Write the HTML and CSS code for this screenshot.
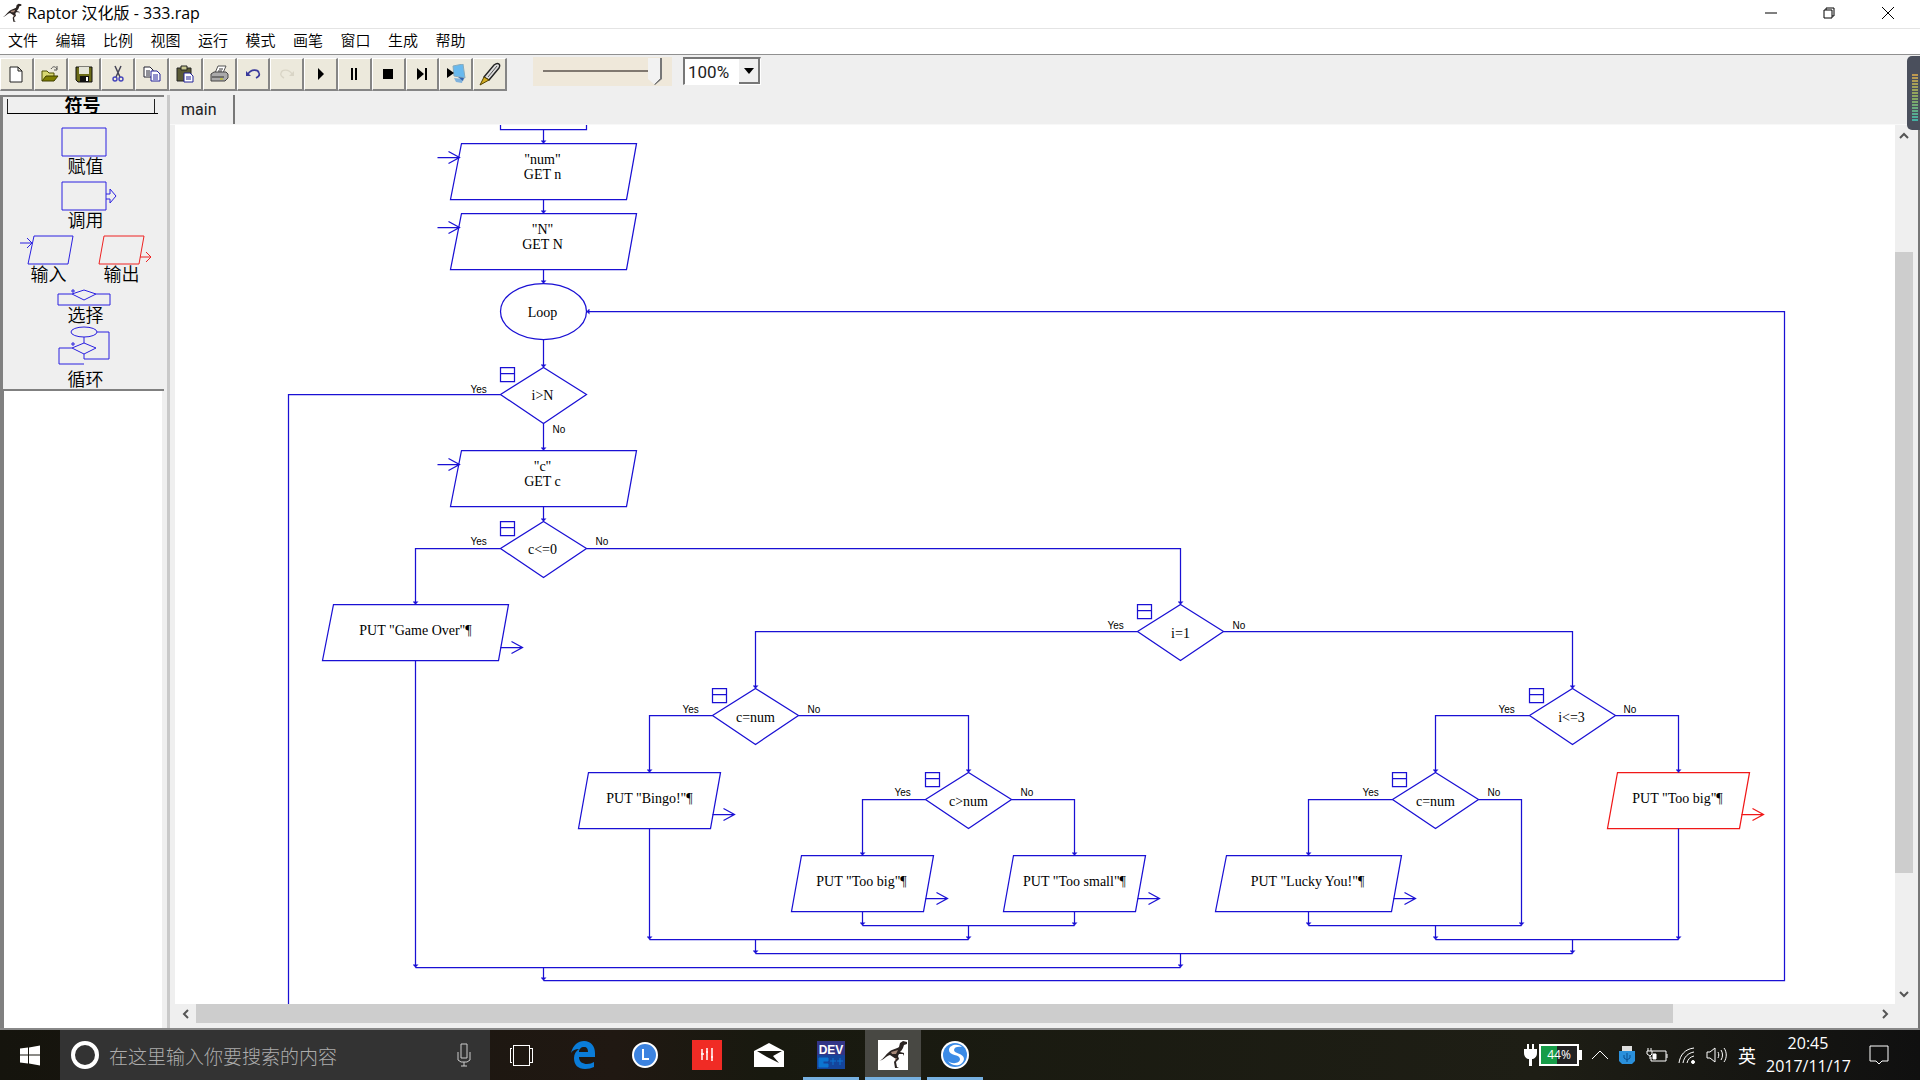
FILE: index.html
```html
<!DOCTYPE html>
<html lang="zh-CN">
<head>
<meta charset="utf-8">
<title>Raptor 汉化版 - 333.rap</title>
<link rel="stylesheet" href="styles.css">
</head>
<body>
<svg class="defs" aria-hidden="true">
  <defs>
    <symbol id="raptor" viewBox="0 0 30 30">
      <path d="M1 21C5 20 7 15 11 12C14 9 18 9 21 7L22 3L25 1L29 2L29 4L26 5L25 8C24 10 23 11 22 12L26 13L26 16L25 14L21 14L20 16L21 19L18 22L19 27L21 28L17 28L16 22L18 19L15 17L12 15C8 16 6 20 1 21Z" fill="#2b2422"/>
      <path d="M13 12L20 10L18 14L14 14ZM17 18L19 18L17 21Z" fill="#a88878"/>
    </symbol>
  </defs>
</svg>

<header class="titlebar">
  <svg class="app-icon"><use href="#raptor"/></svg>
  <h1 class="app-title">Raptor 汉化版 - 333.rap</h1>
  <div class="window-controls">
    <button aria-label="最小化"><svg viewBox="0 0 12 12"><path d="M0 6H12"/></svg></button>
    <button aria-label="还原"><svg viewBox="0 0 12 12"><path d="M1 3H9V11H1ZM3 3V1H11V9H9"/></svg></button>
    <button aria-label="关闭"><svg viewBox="0 0 12 12"><path d="M0 0L12 12M12 0L0 12"/></svg></button>
  </div>
</header>

<nav class="menubar">
  <div class="menus">
    <button>文件</button><button>编辑</button><button>比例</button><button>视图</button><button>运行</button><button>模式</button><button>画笔</button><button>窗口</button><button>生成</button><button>帮助</button>
  </div>
</nav>

<div class="toolbar">
  <div class="tools">
    <button aria-label="新建"><svg viewBox="0 0 20 20"><path d="M4 3H12L16 7V18H4ZM12 3V7H16" fill="#fff" stroke="#222"/></svg></button>
    <button aria-label="打开"><svg viewBox="0 0 20 20"><path d="M2 17V7H7L9 9H14V12" fill="#d8d870" stroke="#4f4f00"/><path d="M2 17L6 12H18L14 17Z" fill="#808000" stroke="#3f3f00"/><path d="M11 5C13 2 15 2 17 5M17 2V6H14" fill="none" stroke="#555"/></svg></button>
    <button aria-label="保存"><svg viewBox="0 0 20 20"><path d="M2 3H18V18H4L2 16Z" fill="#6b6b18" stroke="#111"/><path d="M5 3H15V10H5Z" fill="#e4e4d8"/><path d="M6 12H15V18H6Z" fill="#111"/><path d="M12 13H14V17H12Z" fill="#fff"/></svg></button>
    <button aria-label="剪切"><svg viewBox="0 0 20 20"><path d="M7 2L12 13M13 2L8 13" fill="none" stroke="#445" stroke-width="1.5"/><circle cx="7" cy="15" r="2" fill="none" stroke="#44b" stroke-width="1.4"/><circle cx="13" cy="15" r="2" fill="none" stroke="#44b" stroke-width="1.4"/></svg></button>
    <button aria-label="复制"><svg viewBox="0 0 20 20"><path d="M2 3H8L11 6V13H2Z" fill="#fff" stroke="#223"/><path d="M4 7H8M4 9H8M4 11H8" stroke="#223"/><path d="M9 7H15L18 10V17H9Z" fill="#fff" stroke="#229"/><path d="M11 11H16M11 13H16M11 15H16" stroke="#229"/></svg></button>
    <button aria-label="粘贴"><svg viewBox="0 0 20 20"><path d="M2 4H16V17H2Z" fill="#5a5a34" stroke="#222"/><path d="M6 2H12V6H6Z" fill="#c8c890" stroke="#222"/><path d="M9 9H15L18 12V18H9Z" fill="#fff" stroke="#229"/><path d="M11 13H16M11 15H16" stroke="#229"/></svg></button>
    <button aria-label="打印"><svg viewBox="0 0 20 20"><path d="M6 9L9 2H17L14 9" fill="#fff" stroke="#555"/><path d="M2 10L5 8H17L19 10V14L16 17H2Z" fill="#aaa" stroke="#444"/><path d="M3 13H15M10 5H14M9 7H13" stroke="#333"/><path d="M11 15H14" stroke="#cc0"/></svg></button>
    <button aria-label="撤销"><svg viewBox="0 0 20 20"><path d="M5 10C8 5 15 5 16 9C17 11 15 13 13 14" fill="none" stroke="#3a3a9c" stroke-width="1.6"/><path d="M3 7V12H8Z" fill="#3a3a9c"/></svg></button>
    <button aria-label="重做" disabled><svg viewBox="0 0 20 20"><path d="M15 10C12 5 5 5 4 9C3 11 5 13 7 14" fill="none" stroke="#d9d5c6" stroke-width="1.4"/><path d="M17 7V12H12Z" fill="#d9d5c6"/></svg></button>
    <button aria-label="运行"><svg viewBox="0 0 20 20"><path d="M7 4L13 10L7 16Z"/></svg></button>
    <button aria-label="暂停"><svg viewBox="0 0 20 20"><path d="M7 4H9V16H7ZM11 4H13V16H11Z"/></svg></button>
    <button aria-label="停止"><svg viewBox="0 0 20 20"><path d="M5 5H15V15H5Z"/></svg></button>
    <button aria-label="单步"><svg viewBox="0 0 20 20"><path d="M5 4L12 10L5 16ZM13 4H15V16H13Z"/></svg></button>
    <button aria-label="测试"><svg viewBox="0 0 20 20"><path d="M7 2L17 0L19 14L8 12Z" fill="#68b9ee" stroke="#8ab"/><path d="M8 14L17 15L16 19L10 18Z" fill="#7fb2dc"/><path d="M12 13L18 14L17 17Z" fill="#2e62ad"/><path d="M1 4L8 9L1 14Z"/></svg></button>
    <button aria-label="画笔"><svg viewBox="0 0 24 24"><path d="M6 15L16 3C20 0 23 2 21 6L11 18Z" fill="#ddd" stroke="#222" stroke-width="1.4"/><path d="M10 15L19 4" stroke="#555"/><path d="M6 15L11 18L2 23Z" fill="#d3ad22" stroke="#554400"/></svg></button>
  </div>
  <input class="speed" type="range" min="0" max="100" value="100" aria-label="速度">
  <div class="zoom">
    <select aria-label="缩放"><option>100%</option></select>
    <span class="zoom-arrow"></span>
  </div>
</div>

<main class="workspace">
  <aside class="sidebar">
    <section class="symbols">
      <h2>符号</h2>
      <button><svg width="46" height="30"><path d="M1 1H45V29H1Z"/></svg><span>赋值</span></button>
      <button><svg width="60" height="30"><path d="M8 1H52V29H8ZM52 13H56V8L62 15L56 22V18H52"/></svg><span>调用</span></button>
      <div class="pair">
        <button><svg width="54" height="30"><path d="M14 1H53L48 29H8ZM0 8H12M7 3L12 8L7 13"/></svg><span>输入</span></button>
        <button class="output"><svg width="54" height="30"><path d="M6 1H46L41 29H1ZM42 22H53M48 17L53 22L48 27"/></svg><span>输出</span></button>
      </div>
      <button><svg width="54" height="17"><path d="M15 5H1V16H53V5H39L27 1L15 5L27 11L39 5"/><path d="M15 1H17V3H15Z"/></svg><span>选择</span></button>
      <button><svg width="54" height="40" viewBox="0 4 54 40"><ellipse cx="27" cy="6" rx="13" ry="5"/><path d="M40 6H52V33H27V28M27 11V17L15 22L27 28L39 22L27 17M15 22H2V38H27"/><path d="M15 17H17V19H15Z"/></svg><span>循环</span></button>
    </section>
    <div class="watch"></div>
  </aside>

  <section class="document">
    <div class="tabs"><button class="tab">main</button></div>
    <div class="view">
      <div class="canvas">
        <svg class="chart" width="1720" height="880" viewBox="174.5 124.5 1720 880">
          <defs>
            <marker id="tip" viewBox="0 0 8 6" refX="5" refY="3" markerWidth="8" markerHeight="6" orient="auto" markerUnits="userSpaceOnUse"><path class="tip" d="M2 0L5 3L2 6Z"/></marker>
            <symbol id="decision" overflow="visible"><path d="M0 0L43 27L0 56L-43 27Z"/><path d="M-43 0H-29V14H-43ZM-43 6H-29"/></symbol>
            <symbol id="arrow" overflow="visible"><path d="M0 0H22M11 -6L22 0L11 6"/></symbol>
            <symbol id="wide" overflow="visible"><path d="M-82 0H93L83 56H-93Z"/></symbol>
            <symbol id="narrow" overflow="visible"><path d="M-61 0H71L61 56H-71Z"/></symbol>
          </defs>
          <g class="shapes">
            <path d="M500 120V129H586V120"/>
            <use href="#wide" x="543" y="143"/><use href="#arrow" x="437" y="157"/>
            <use href="#wide" x="543" y="213"/><use href="#arrow" x="437" y="227"/>
            <ellipse cx="543" cy="311" rx="43" ry="28"/>
            <use href="#decision" x="543" y="367"/>
            <use href="#wide" x="543" y="450"/><use href="#arrow" x="437" y="464"/>
            <use href="#decision" x="543" y="521"/>
            <use href="#wide" x="415" y="604"/><use href="#arrow" x="500" y="647"/>
            <use href="#decision" x="1180" y="604"/>
            <use href="#decision" x="755" y="688"/>
            <use href="#decision" x="1572" y="688"/>
            <use href="#narrow" x="649" y="772"/><use href="#arrow" x="712" y="814"/>
            <use href="#decision" x="968" y="772"/>
            <use href="#decision" x="1435" y="772"/>
            <use href="#narrow" x="862" y="855"/><use href="#arrow" x="925" y="898"/>
            <use href="#narrow" x="1074" y="855"/><use href="#arrow" x="1137" y="898"/>
            <use href="#wide" x="1308" y="855"/><use href="#arrow" x="1393" y="898"/>
          </g>
          <g class="shapes current"><use href="#narrow" x="1678" y="772"/><use href="#arrow" x="1741" y="814"/></g>
          <g class="links">
            <path d="M543 129V143"/><path d="M543 199V213"/><path d="M543 269V283"/><path d="M543 339V367"/>
            <path d="M543 423V450"/><path d="M543 506V521"/>
            <path d="M500 394H288V1010"/>
            <path d="M500 548H415V604"/><path d="M586 548H1180V604"/>
            <path d="M1137 631H755V688"/><path d="M1223 631H1572V688"/>
            <path d="M712 715H649V772"/><path d="M798 715H968V772"/>
            <path d="M925 799H862V855"/><path d="M1011 799H1074V855"/>
            <path d="M1529 715H1435V772"/><path d="M1615 715H1678V772"/>
            <path d="M1392 799H1308V855"/><path d="M1478 799H1521V925"/>
            <path d="M862 911V925"/><path d="M1074 911V925"/><path d="M1308 911V925"/>
            <path d="M649 828V939"/><path d="M968 925V939"/><path d="M1435 925V939"/><path d="M1678 828V939"/>
            <path d="M755 939V953"/><path d="M1572 939V953"/>
            <path d="M415 660V967"/><path d="M1180 953V967"/>
            <path d="M543 967V980"/><path d="M543 980H1784V311H586"/>
          </g>
          <g class="joins"><path d="M862 925H1074M1308 925H1521M649 939H968M1435 939H1678M755 953H1572M415 967H1180"/></g>
          <g class="code">
            <text x="542" y="163">"num"</text><text x="542" y="178">GET n</text>
            <text x="542" y="233">"N"</text><text x="542" y="248">GET N</text>
            <text x="542" y="316">Loop</text>
            <text x="542" y="399">i&gt;N</text>
            <text x="542" y="470">"c"</text><text x="542" y="485">GET c</text>
            <text x="542" y="553">c&lt;=0</text>
            <text x="415" y="634">PUT "Game Over"¶</text>
            <text x="1180" y="637">i=1</text>
            <text x="755" y="721">c=num</text><text x="1571" y="721">i&lt;=3</text>
            <text x="649" y="802">PUT "Bingo!"¶</text>
            <text x="968" y="805">c&gt;num</text><text x="1435" y="805">c=num</text>
            <text x="1677" y="802">PUT "Too big"¶</text>
            <text x="861" y="885">PUT "Too big"¶</text>
            <text x="1074" y="885">PUT "Too small"¶</text>
            <text x="1307" y="885">PUT "Lucky You!"¶</text>
          </g>
          <g class="branch">
            <text x="470" y="392">Yes</text><text x="552" y="432">No</text>
            <text x="470" y="544">Yes</text><text x="595" y="544">No</text>
            <text x="1107" y="628">Yes</text><text x="1232" y="628">No</text>
            <text x="682" y="712">Yes</text><text x="807" y="712">No</text>
            <text x="1498" y="712">Yes</text><text x="1623" y="712">No</text>
            <text x="894" y="795">Yes</text><text x="1020" y="795">No</text>
            <text x="1362" y="795">Yes</text><text x="1487" y="795">No</text>
          </g>
        </svg>
      </div>
      <div class="vscroll">
        <button aria-label="向上"><svg viewBox="0 0 10 10"><path d="M1 7L5 3L9 7"/></svg></button>
        <div class="vtrack"><div class="vthumb"></div></div>
        <button aria-label="向下"><svg viewBox="0 0 10 10"><path d="M1 3L5 7L9 3"/></svg></button>
      </div>
      <div class="hscroll">
        <button aria-label="向左"><svg viewBox="0 0 10 10"><path d="M7 1L3 5L7 9"/></svg></button>
        <div class="htrack"><div class="hthumb"></div></div>
        <button aria-label="向右"><svg viewBox="0 0 10 10"><path d="M3 1L7 5L3 9"/></svg></button>
      </div>
    </div>
  </section>
</main>

<div class="meter"><span></span></div>

<footer class="taskbar">
  <button class="start" aria-label="开始"><svg viewBox="0 0 20 20"><path d="M0 3L8 2V9H0ZM9 2L20 0V9H9ZM0 10H8V18L0 17ZM9 10H20V20L9 18Z" fill="#fff"/></svg></button>
  <label class="search">
    <span class="ring"></span>
    <input type="text" placeholder="在这里输入你要搜索的内容" aria-label="搜索">
    <svg class="mic" viewBox="0 0 16 24"><path d="M5 1H11V15H5ZM2 9V17L5 19H11L14 17V9M8 19V23M5 23H11"/></svg>
  </label>
  <div class="apps">
    <button aria-label="任务视图"><svg width="24" height="22" viewBox="0 0 24 22"><path d="M4 1H20V21H4ZM3 4H1V18H3M21 4H23V18H21" fill="none" stroke="#fff" shape-rendering="crispEdges"/></svg></button>
    <button aria-label="Edge"><svg width="26" height="28" viewBox="0 0 26 28"><path d="M1 12C3 4 8 0 14 0C21 0 25 5 25 12V16H9C9 21 13 23 17 23C20 23 22 22 24 21V26C21 27 19 28 15 28C8 28 4 24 4 17C4 13 6 10 9 8C5 8 3 9 1 12ZM9 11H18C18 8 17 6 14 6C11 6 9 8 9 11Z" fill="#0a7cd8"/></svg></button>
    <button aria-label="时钟"><svg width="28" height="28" viewBox="0 0 28 28"><circle cx="14" cy="14" r="12" fill="#3c83e0" stroke="#fff" stroke-width="2"/><path d="M12 8V18H18" fill="none" stroke="#fff" stroke-width="2"/></svg></button>
    <button aria-label="资讯"><svg width="30" height="30" viewBox="0 0 30 30"><path d="M0 0H30V30H0Z" fill="#f02b25"/><path d="M10 9V20M15 8V20M20 8V21M9 14H12M14 12H16M19 17H21" stroke="#fff" stroke-width="1.5"/></svg></button>
    <button aria-label="邮件"><svg width="30" height="24" viewBox="0 0 30 24"><path d="M0 8L15 0L30 8V24H0Z" fill="#fff"/><path d="M3 8H28L19 13L25 20L13 14Z" fill="#17170f"/></svg></button>
    <button class="open" aria-label="Dev-C++"><svg width="28" height="28" viewBox="0 0 28 28"><path d="M0 0H28V28H0Z" fill="#14459c"/><path d="M0 0H28V14H0Z" fill="#333587"/><path d="M2 17H11V20H6V23H11V26H2ZM13 20H19M16 17V24M20 20H26M23 17V24" fill="#0c75d0" stroke="#0c75d0"/><text x="14" y="13" text-anchor="middle" class="dev">DEV</text></svg></button>
    <button class="open active" aria-label="Raptor"><svg class="white" width="30" height="30"><use href="#raptor"/></svg></button>
    <button class="open" aria-label="搜狗"><svg width="28" height="28" viewBox="0 0 28 28"><circle cx="14" cy="14" r="14" fill="#fff"/><circle cx="14" cy="14" r="12" fill="#3b8be6"/><path d="M21 6C17 2 8 4 8 9C8 15 19 13 19 18C19 22 12 24 7 20C12 27 22 25 23 18C23 12 13 13 13 9C13 6 17 5 21 6Z" fill="#fff"/></svg></button>
  </div>
  <div class="tray">
    <div class="battery">
      <svg width="13" height="22" viewBox="0 0 13 22"><path d="M3 0H5V5H8V0H10V5H13V9C13 13 10 15 8 15V22H5V15C3 15 0 13 0 9V5H3Z" fill="#fff"/></svg>
      <span class="level">44%</span><span class="cap"></span>
    </div>
    <svg width="16" height="10" viewBox="0 0 16 10"><path d="M0 9L8 1L16 9"/></svg>
    <svg width="18" height="20" viewBox="0 0 18 20"><path d="M4 1H14V6H4Z" fill="#ddd" stroke="none"/><path d="M1 6H17V16L14 19H4L1 16Z" fill="#2a90dc" stroke="none"/><path d="M9 8V17M6 10V13L9 15L12 13V10" stroke="#0b4e90"/></svg>
    <svg width="22" height="14" viewBox="0 0 22 14"><path d="M6 3H20V13H5V9M21 6V10M1 3H6V6L4 8L1 6ZM2 0V3M5 0V3M4 8V11"/><path d="M7 6H10V11H7Z" fill="#fff"/></svg>
    <svg width="18" height="17" viewBox="0 0 18 17"><path d="M1 16C2 8 7 2 16 1M5 16C6 10 10 6 16 5M9 16C10 12 12 10 16 9"/><circle cx="15" cy="15" r="1.5" fill="#fff"/></svg>
    <svg width="22" height="16" viewBox="0 0 22 16"><path d="M1 5H4L9 1V15L4 11H1ZM12 5C13 7 13 9 12 11M15 3C17 6 17 10 15 13M18 1C21 5 21 11 18 15"/></svg>
    <span class="ime">英</span>
    <time class="clock"><span>20:45</span><span>2017/11/17</span></time>
    <svg class="notice" width="20" height="20" viewBox="0 0 20 20"><path d="M1 1H19V16H13L10 19L7 16H1Z"/></svg>
  </div>
</footer>
</body>
</html>
```
FILE: styles.css
```css
* { box-sizing: border-box; }

body {
  display: flex;
  flex-direction: column;
  height: 100vh;
  margin: 0;
  overflow: hidden;
  background: #efefef;
  color: #000;
  font-family: "Open Sans", "Noto Sans CJK SC", sans-serif;
}

button {
  margin: 0;
  padding: 0;
  border: 0;
  background: none;
  color: inherit;
  font: inherit;
}

.defs { display: none; }

/* Title bar */
.titlebar {
  display: flex;
  align-items: center;
  height: 29px;
  padding: 0 2px 2px;
  background: #fff;
  border-bottom: 1px solid #e4e4e4;
}
.app-icon { width: 20px; height: 20px; }
.app-title {
  flex: 1;
  margin: 0;
  padding-left: 5px;
  font-size: 16px;
  font-weight: 400;
  line-height: 24px;
}
.window-controls { display: flex; }
.window-controls button {
  display: grid;
  place-items: center;
  width: 58px;
  height: 26px;
}
.window-controls button:last-child { width: 60px; }
.window-controls svg {
  width: 12px;
  height: 12px;
  overflow: visible;
  fill: none;
  stroke: #000;
}

/* Menu */
.menubar {
  height: 26px;
  padding-left: 8px;
  background: #fff;
  border-bottom: 1px solid #909090;
}
.menus {
  display: grid;
  grid-template-columns: repeat(10, 1fr);
  width: 475px;
  font-size: 15px;
  font-weight: 350;
  line-height: 23px;
}
.menubar button { text-align: left; }

/* Toolbar */
.toolbar {
  display: flex;
  align-items: flex-start;
  height: 40px;
  padding-top: 2px;
}
.tools {
  display: grid;
  grid-template-columns: repeat(15, 1fr);
  width: 507px;
  height: 34px;
  padding-top: 1px;
}
.tools button {
  display: grid;
  place-items: center;
  background: #ece9dc;
  border: solid #fff;
  border-width: 1px 2px 2px 1px;
  border-right-color: #858585;
  border-bottom-color: #858585;
}
.tools svg { width: 20px; height: 20px; }
.tools button:last-child svg { width: 24px; height: 24px; }

.speed {
  appearance: none;
  width: 139px;
  height: 29px;
  margin: 0 11px 0 26px;
  padding: 0 10px;
  background: linear-gradient(#807870, #807870) 10px 13px / 106px 2px no-repeat, #efe8da;
}
.speed::-webkit-slider-thumb {
  appearance: none;
  width: 14px;
  height: 27px;
  background:
    linear-gradient(135deg, #f2f2f2 83%, #777 84%);
  border-right: 2px solid #777;
  clip-path: polygon(0 0, 100% 0, 100% 78%, 50% 100%, 0 78%);
}

.zoom {
  display: grid;
  grid-template-columns: 1fr 21px;
  width: 78px;
  height: 28px;
  background: #fff;
  border: solid #777;
  border-width: 2px 1px 1px 2px;
  border-right-color: #fff;
  border-bottom-color: #fff;
}
.zoom select {
  appearance: none;
  grid-area: 1 / 1 / 2 / 3;
  padding: 0 0 0 3px;
  border: 0;
  background: none;
  color: #222;
  font: 17px Roboto, sans-serif;
}
.zoom-arrow {
  display: grid;
  place-items: center;
  grid-area: 1 / 2;
  background: #efefef;
  border: solid #777;
  border-width: 0 2px 2px 0;
  pointer-events: none;
}
.zoom-arrow::after {
  content: "";
  border: 5px solid transparent;
  border-top: 6px solid #000;
  border-bottom: 0;
}

/* Work area */
.workspace {
  display: flex;
  flex: 1;
  min-height: 0;
  border-right: 2px solid #777;
  border-bottom: 2px solid #888;
}
.sidebar {
  display: flex;
  flex-direction: column;
  width: 170px;
  border-right: 3px solid #c9c9c9;
}
.symbols {
  display: flex;
  flex-direction: column;
  align-items: center;
  gap: 5px;
  height: 296px;
  margin-right: 3px;
  border: solid #808080;
  border-width: 2px 0 2px 3px;
  font-size: 18px;
  font-weight: 350;
  line-height: 19px;
}
.symbols h2 {
  align-self: stretch;
  height: 18px;
  margin: 0 6px 8px 4px;
  border-bottom: 1px solid #000;
  background:
    linear-gradient(#222, #222) 0 100% / 1px 14px no-repeat,
    linear-gradient(#222, #222) calc(100% - 3px) 100% / 1px 14px no-repeat;
  font-size: 18px;
  font-weight: 700;
  line-height: 16px;
  text-align: center;
}
.symbols button {
  display: flex;
  flex-direction: column;
  align-items: center;
}
.symbols span { padding-left: 4px; }
.symbols .output span { padding: 0 6px 0 0; }
.symbols svg {
  overflow: visible;
  fill: none;
  stroke: #2a20e0;
}
.symbols .output svg { stroke: #ee2222; }
.pair {
  display: flex;
  gap: 24px;
  padding-left: 4px;
}
.watch {
  flex: 1;
  margin-right: 5px;
  background: #fff;
  border-left: 4px solid #808080;
}

.document {
  display: flex;
  flex: 1;
  flex-direction: column;
  min-width: 0;
}
.tabs {
  height: 30px;
  padding-left: 5px;
  border-bottom: 1px solid #f8f8f8;
}
.tab {
  height: 29px;
  padding: 0 17px 0 6px;
  border-right: 2px solid #777;
  color: #222;
  font: 16px Roboto, sans-serif;
}
.view {
  display: grid;
  flex: 1;
  grid-template: minmax(0, 1fr) 24px / minmax(0, 1fr) 23px;
  min-height: 0;
  padding-left: 5px;
}
.canvas {
  overflow: hidden;
  background: #fff;
}
.chart { display: block; }
.chart path, .chart ellipse { fill: none; }
.shapes, .links, .joins {
  stroke: #1a10d4;
  stroke-width: 1.25;
}
.shapes.current { stroke: #f01818; }
.links path { marker-end: url(#tip); }
.chart .tip { fill: #1a10d4; stroke: none; }
.code {
  font: 14px "Liberation Serif", serif;
  text-anchor: middle;
}
.branch { font: 10px "Liberation Sans", sans-serif; }

.vscroll { display: flex; flex-direction: column; width: 18px; }
.hscroll { display: flex; height: 20px; }
.vscroll button, .hscroll button {
  display: grid;
  place-items: center;
  flex: none;
  width: 18px;
  height: 21px;
}
.hscroll button { width: 21px; height: 20px; }
.vscroll svg, .hscroll svg {
  width: 10px;
  height: 10px;
  fill: none;
  stroke: #555;
  stroke-width: 2;
}
.vtrack { flex: 1; padding-top: 106px; }
.vthumb { height: 85%; background: #cdcdcd; }
.htrack { flex: 1; }
.hthumb { width: 88%; height: 19px; background: #cdcdcd; }

/* Level meter docked to the screen edge */
.meter {
  position: absolute;
  top: 56px;
  right: 0;
  width: 13px;
  height: 74px;
  padding: 18px 2px 8px 5px;
  background: #4a4f5c;
  border-radius: 5px 0 0 5px;
}
.meter span {
  display: block;
  height: 48px;
  background:
    repeating-linear-gradient(transparent 0 2px, #4a4f5c 2px 3px),
    linear-gradient(#c09850, #88a860 50%, #40b0a8);
}

/* Taskbar */
.taskbar {
  display: flex;
  height: 50px;
  background: linear-gradient(90deg, #15140d, #201812 32%, #18190f 40%, #1e1e15 80%, #101010);
  color: #fff;
}
.start {
  display: grid;
  place-items: center;
  width: 60px;
}
.start svg { width: 20px; height: 21px; }
.search {
  display: flex;
  align-items: center;
  width: 430px;
  padding: 0 18px 0 11px;
  background: #333;
}
.ring {
  width: 28px;
  height: 28px;
  border: 4px solid #fff;
  border-radius: 50%;
}
.search input {
  flex: 1;
  min-width: 0;
  padding: 0 0 0 10px;
  border: 0;
  background: none;
  font: 300 19px "Noto Sans CJK SC", sans-serif;
}
.search input::placeholder { color: #adadad; }
.mic {
  width: 16px;
  height: 24px;
  fill: none;
  stroke: #ccc;
}
.apps {
  display: flex;
  flex: 1;
  gap: 6px;
  padding-left: 3px;
}
.apps button {
  display: grid;
  place-items: center;
  width: 56px;
  border-bottom: 3px solid transparent;
  border-top: 3px solid transparent;
}
.apps .open { border-bottom-color: #76b0e0; }
.apps .active { background: #484843; }
.white { background: #fff; }
.dev { font: 700 12px "Liberation Sans", sans-serif; fill: #fff; }

.tray {
  display: flex;
  align-items: center;
  gap: 10px;
  padding-right: 31px;
}
.tray svg { fill: none; stroke: #fff; }
.battery { display: flex; align-items: center; }
.battery svg { margin-right: 2px; stroke: none; }
.level {
  width: 40px;
  height: 22px;
  border: 2px solid #fff;
  background: linear-gradient(90deg, #169c48 44%, #222 44%);
  font: 12px/18px "Open Sans", sans-serif;
  text-align: center;
}
.cap { width: 3px; height: 10px; background: #fff; }
.ime { font-size: 18px; }
.clock {
  display: flex;
  flex-direction: column;
  width: 84px;
  font-size: 16px;
  line-height: 23px;
  text-align: center;
}
.notice { margin-left: 9px; }
```
